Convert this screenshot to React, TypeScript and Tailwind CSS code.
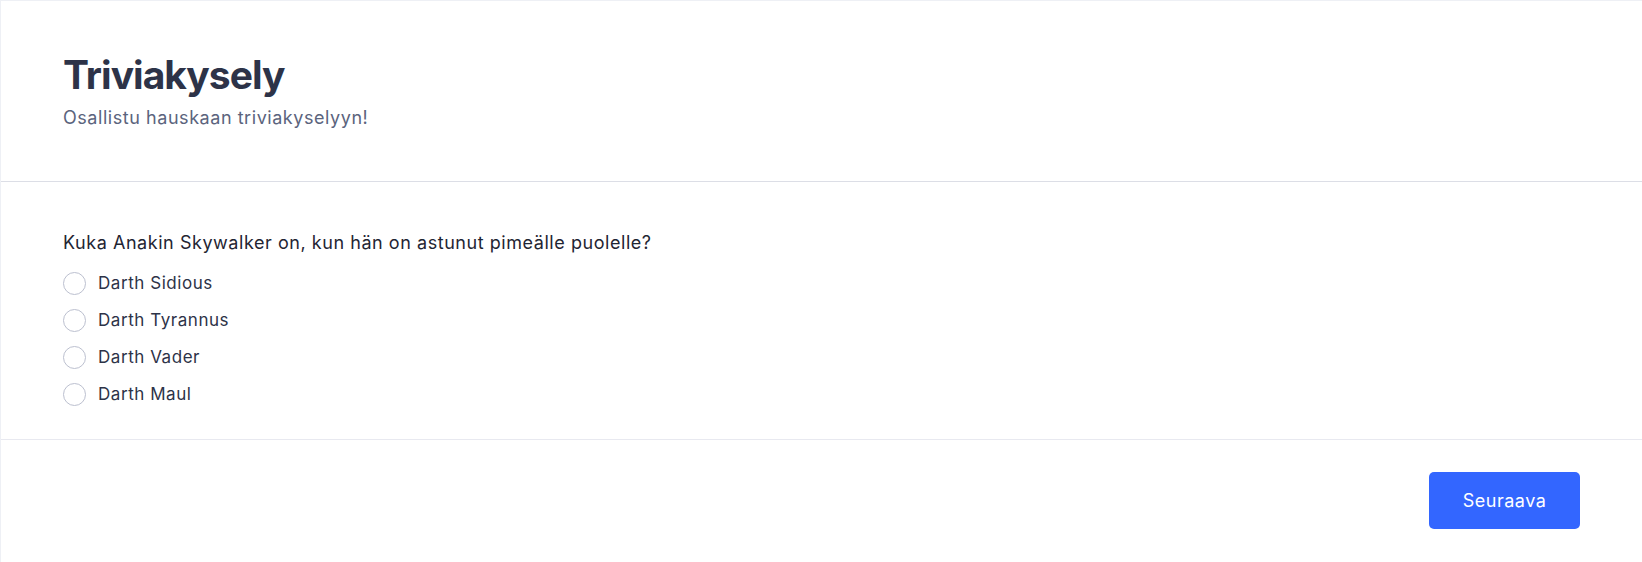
import { useState } from "react";

const options = ["Darth Sidious", "Darth Tyrannus", "Darth Vader", "Darth Maul"];

export default function App() {
  const [answer, setAnswer] = useState<string | null>(null);

  return (
    <div className="min-h-screen bg-white font-['Inter',sans-serif] border-t border-l border-[#eef0f5]">
      <div className="px-[62px] pt-[50px] pb-[49px] border-b border-[#dcdee6]">
        <h1 className="text-[39px] leading-[48px] font-bold tracking-[-0.025em] text-[#2d3348]">Triviakysely</h1>
        <p className="mt-[5px] text-lg leading-7 tracking-[0.55px] text-[#5b647d]">Osallistu hauskaan triviakyselyyn!</p>
      </div>

      <div className="px-[62px] pt-[47px] pb-[33px] border-b border-[#e8e9f0]">
        <p className="text-lg leading-7 tracking-[0.55px] text-[#1f2533]">
          Kuka Anakin Skywalker on, kun hän on astunut pimeälle puolelle?
        </p>
        <div className="mt-[14px] flex flex-col gap-[13px]">
          {options.map((o) => (
            <label key={o} className="flex items-center gap-[12px] cursor-pointer">
              <span
                onClick={() => setAnswer(o)}
                className={`w-[23px] h-[23px] rounded-full border ${
                  answer == o ? "border-[#3366ff] border-[6px]" : "border-[#bcc0cf]"
                }`}
              />
              <span className="text-[17px] leading-6 tracking-[0.55px] text-[#2d3348]">{o}</span>
            </label>
          ))}
        </div>
      </div>

      <div className="flex justify-end px-[62px] pt-[32px] pb-[33px]">
        <button className="w-[151px] h-[57px] rounded-[5px] bg-[#3366ff] text-white text-lg tracking-[0.5px]">
          Seuraava
        </button>
      </div>
    </div>
  );
}
